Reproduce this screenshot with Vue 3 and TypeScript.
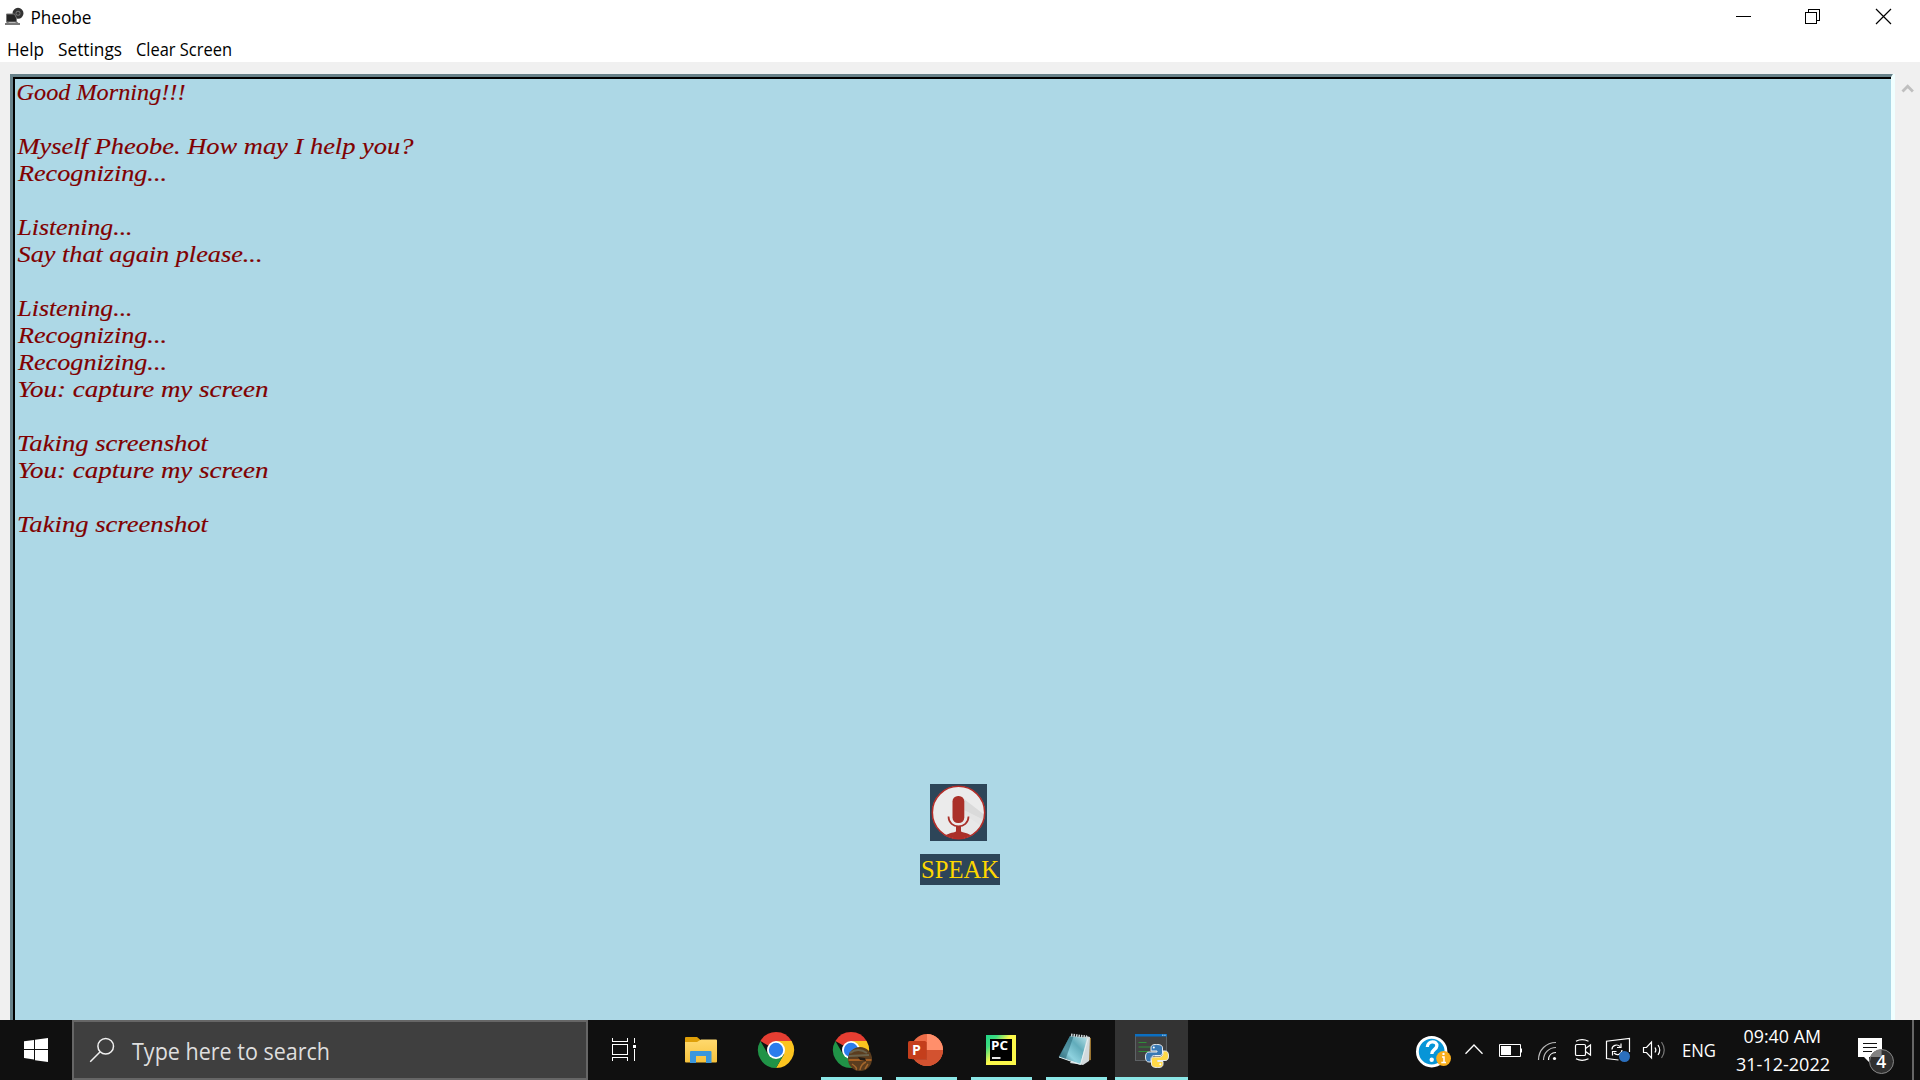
<script setup lang="ts">
interface LogLine { text: string; x: number; width: number }

const good: LogLine = { text: 'Good Morning!!!', x: 1.5, width: 169 }
const intro: LogLine = { text: 'Myself Pheobe. How may I help you?', x: 2.5, width: 396 }
const recognizing: LogLine = { text: 'Recognizing...', x: 3, width: 149 }
const listening: LogLine = { text: 'Listening...', x: 2.5, width: 115 }
const again: LogLine = { text: 'Say that again please...', x: 2.5, width: 245 }
const you: LogLine = { text: 'You: capture my screen', x: 2.5, width: 251 }
const taking: LogLine = { text: 'Taking screenshot', x: 2, width: 191 }

const log: (LogLine | null)[] = [
  good, null, intro, recognizing, null, listening, again, null,
  listening, recognizing, recognizing, you, null, taking, you, null, taking,
]

const menu = [
  { text: 'Help', width: 37, box: 50 },
  { text: 'Settings', width: 64, box: 77 },
  { text: 'Clear Screen', width: 96, box: 110 },
]
</script>

<template>
  <div class="screen">
    <header class="titlebar">
      <svg class="appicon" width="31" height="36" viewBox="0 0 31 36">
        <circle cx="18" cy="13.3" r="4" fill="#777" stroke="#333" stroke-width="3" />
        <circle cx="18" cy="13.3" r="1.500" fill="#333" />
        <path d="M6.500 14h8l2 4v4h-10z" fill="#262626" stroke="#777" />
        <path d="M5 24h15M8 22l-1 2M16 22l2 2" stroke="#777" stroke-width="2" />
      </svg>
      <svg class="ui" width="70" height="36"><text x="-0.500" y="24" font-size="18" textLength="61" lengthAdjust="spacingAndGlyphs">Pheobe</text></svg>
      <svg class="controls" width="190" height="36" viewBox="1730 0 190 36" fill="none" stroke="#000" shape-rendering="crispEdges">
        <path d="M1736 16.500h15" />
        <path d="M1805.500 12.500h11v11h-11zM1808.500 12V9.500h11v11H1817" />
        <path d="M1876 9l15 15M1891 9l-15 15" shape-rendering="auto" stroke-width="1.200" />
      </svg>
    </header>
    <nav class="menubar">
      <svg v-for="m in menu" :key="m.text" class="ui" :width="m.box" height="26">
        <text x="0" y="20" font-size="18" :textLength="m.width" lengthAdjust="spacingAndGlyphs">{{ m.text }}</text>
      </svg>
    </nav>

    <main class="body">
      <section class="outer">
        <div class="inner">
          <svg v-for="(line, i) in log" :key="i" class="line" width="460" height="27">
            <text v-if="line" :x="line.x" y="21" :textLength="line.width" lengthAdjust="spacingAndGlyphs">{{ line.text }}</text>
          </svg>
        </div>
      </section>
      <aside class="scroll">
        <svg width="25" height="30" viewBox="1895 74 25 30"><path d="M1902.500 91.500l5.200-5.200 5.200 5.200" fill="none" stroke="#bfbfbf" stroke-width="2.800" /></svg>
      </aside>
      <div class="speak">
        <svg class="mic" width="57" height="57" viewBox="0 0 57 57">
          <defs><clipPath id="disc"><circle cx="28.500" cy="28.500" r="26" /></clipPath></defs>
          <rect width="57" height="57" fill="#2d4558" />
          <circle cx="28.500" cy="28.500" r="26.500" fill="#ebebeb" />
          <g clip-path="url(#disc)">
            <path d="M34 15l24 21v20H34z" fill="#e4e4e4" />
            <path d="M34 15l22 17v5L34 26z" fill="#dadada" />
            <path d="M34 30l20 14-12 9H30V44z" fill="#e8e8e8" />
            <path d="M14 54c1-4 7-5 11-6 1 0 1-1 1-2v-4h5v4c0 1 0 2 1 2 5 1 10 3 11 6l-14 4z" fill="#aa3029" />
          </g>
          <circle cx="28.500" cy="28.500" r="26.200" fill="none" stroke="#b42d28" stroke-width="1.600" />
          <rect x="22.500" y="12" width="11.800" height="27" rx="5.500" fill="#aa3029" />
          <path d="M18.500 32.500c0 13 20 13 20 0" fill="none" stroke="#aa3029" stroke-width="1.700" />
        </svg>
        <svg class="label" width="80" height="31"><text x="1" y="24" textLength="78" lengthAdjust="spacingAndGlyphs">SPEAK</text></svg>
      </div>
    </main>

    <footer class="taskbar">
      <svg width="72" height="60" viewBox="0 1020 72 60" fill="#fff">
        <path d="M24 1041.300l10-1.400v9.100H24zM35 1039.700l13-1.700v11H35zM24 1050h10v9.500l-10-1.400zM35 1050h13v12l-13-1.800z" />
      </svg>
      <div class="search">
        <svg width="56" height="56" viewBox="74 1022 56 56" fill="none" stroke="#f0f0f0" stroke-width="1.500">
          <circle cx="105.700" cy="1046.300" r="7.800" /><path d="M100.200 1051.800l-10 10" />
        </svg>
        <svg class="ui" width="220" height="56"><text x="2" y="38" font-size="23" fill="#dedede" textLength="198" lengthAdjust="spacingAndGlyphs">Type here to search</text></svg>
      </div>
      <svg width="76" height="60" viewBox="588 1020 76 60" fill="none" stroke="#fff" shape-rendering="crispEdges">
        <path d="M612.500 1038v3.500h15V1038M612.500 1044.500h15v10h-15zM612.500 1061v-3.500h15v3.500M634.500 1038v5M634.500 1049v12" />
        <path d="M633 1045h3v3h-3z" fill="#fff" stroke="none" />
      </svg>
      <svg width="75" height="60" viewBox="664 1020 75 60">
        <defs><linearGradient id="fold" x1="0" y1="0" x2="0" y2="1"><stop stop-color="#ffd96e" /><stop offset="1" stop-color="#f7c23c" /></linearGradient></defs>
        <path d="M685 1038q0-1 1-1h11l3 2.500v4h-15z" fill="#df9f08" />
        <path d="M685 1042h12l4-2.500h15q1 0 1 1v21q0 1-1 1h-30q-1 0-1-1z" fill="url(#fold)" />
        <path d="M690 1063v-11q0-1 1-1h19.500q1 0 1 1v11H706v-7h-10v7z" fill="#3b97dd" />
      </svg>
      <svg width="75" height="60" viewBox="739 1020 75 60">
        <g id="chromeMark">
          <path d="M776 1050L760.400 1041A18 18 0 0 1 791.600 1041z" fill="#e53e32" />
          <path d="M776 1041h15.600A18 18 0 0 1 776 1068l7.800-13.500z" fill="#fcc41f" />
          <path d="M783.800 1054.500L776 1068A18 18 0 0 1 760.400 1041l7.800 13.500z" fill="#209347" />
          <circle cx="776" cy="1050" r="9" fill="#fff" /><circle cx="776" cy="1050" r="7.200" fill="#2b7cec" />
        </g>
      </svg>
      <div class="slot run">
        <svg width="75" height="60" viewBox="814 1020 75 60">
          <use href="#chromeMark" x="75" />
          <circle cx="860" cy="1059" r="12" fill="#5b3d1f" />
          <path d="M850 1053q8-6 17 0M849 1056l20-1" stroke="#6b634c" stroke-width="2" fill="none" />
          <path d="M848.500 1060h23" stroke="#b96a25" stroke-width="1.600" /><path d="M852 1064q6 4 4 6M866 1062q-5 2-6 8M868 1064l-3 5" stroke="#a3662c" stroke-width="1.500" fill="none" />
          <path d="M858 1057l7 1 1 3-6-1z" fill="#231b14" />
        </svg>
      </div>
      <div class="slot run">
        <svg width="75" height="60" viewBox="889 1020 75 60">
          <circle cx="927" cy="1050" r="16" fill="#ed6c47" />
          <path d="M927 1034a16 16 0 0 1 16 16h-16z" fill="#ff8f6b" />
          <path d="M911 1050h32a16 16 0 0 1-32 0z" fill="#d35230" />
          <path d="M911 1042h16v18h-15z" fill="#9b351d" opacity=".35" />
          <rect x="908" y="1041" width="18.300" height="18" rx="1.500" fill="#c43e1c" />
          <text x="912" y="1055" font-family="Open Sans, sans-serif" font-size="14" font-weight="700" fill="#fff">P</text>
        </svg>
      </div>
      <div class="slot run">
        <svg width="75" height="60" viewBox="964 1020 75 60">
          <defs><linearGradient id="pyc" x1="0" y1="0" x2=".65" y2=".55"><stop stop-color="#20d789" /><stop offset=".35" stop-color="#3fdc80" /><stop offset=".75" stop-color="#fcf84a" /></linearGradient></defs>
          <rect x="986" y="1035" width="30" height="30" fill="url(#pyc)" /><rect x="990" y="1039" width="22" height="22" fill="#000" />
          <text x="991" y="1050.300" font-family="Open Sans, sans-serif" font-size="12" font-weight="700" fill="#fff" textLength="17" lengthAdjust="spacingAndGlyphs">PC</text>
          <path d="M992 1058h8.500" stroke="#fff" stroke-width="1.800" />
        </svg>
      </div>
      <div class="slot run">
        <svg width="75" height="60" viewBox="1039 1020 75 60">
          <defs><linearGradient id="note" x1="0" y1="1" x2="1" y2="0"><stop stop-color="#255f6e" /><stop offset=".35" stop-color="#8ed2df" /><stop offset=".65" stop-color="#62acbb" /><stop offset="1" stop-color="#b9e3e9" /></linearGradient></defs>
          <path d="M1084 1037l7 1v22l-5 1z" fill="#9a7430" />
          <path d="M1086 1036l4 1-1 24-6 4-13-2z" fill="#d2d9dc" />
          <path d="M1070 1036l17 1.500-6.500 26.500-21.500-7z" fill="url(#note)" />
          <path d="M1070 1036l-11.500 21 7 2.500 8-23z" fill="#266575" opacity=".55" />
          <path d="M1071 1035l16 2" stroke="#cdd6d9" stroke-width="3" stroke-dasharray="1.500 1" />
          <path d="M1059 1057l21.500 7.500 7.500-26" fill="none" stroke="#e3f1f3" />
        </svg>
      </div>
      <div class="slot run active">
        <svg width="73" height="60" viewBox="1115 1020 73 60">
          <rect x="1135.500" y="1034.500" width="31" height="26" fill="#414141" stroke="#5e6265" />
          <path d="M1135 1034h32v2.500h-32z" fill="#0b6fc2" /><path d="M1162 1035.200h4" stroke="#a9d2f0" stroke-dasharray="1.500 .7" />
          <path d="M1138.500 1042.500h8M1138.500 1047h12M1138.500 1051.500h10" stroke="#2f8f39" stroke-width="1.100" />
          <g stroke="#e9eef2" stroke-width="1">
            <path d="M1156.500 1044.500c-4 0-5.500 1-5.500 3.500v3h6v1h-8c-2.500 0-3.500 2-3.500 5s1 5 3.500 5h2v-3c0-2 1.500-3.500 3.500-3.500h5.500c1.500 0 2.500-1 2.500-2.500v-5c0-2.500-2-3.500-6-3.500z" fill="#3979b5" />
            <path d="M1157.500 1067.500c4 0 5.500-1 5.500-3.500v-2.500h-5.500v-1h7.500c2.500 0 3.500-1.500 3.500-4.500 0-3.500-1-5-3.500-5h-2v2.500c0 2-1.500 3.500-3.500 3.500h-5c-2 0-3 1-3 2.500v4.500c0 2.500 2 3.500 6 3.500z" fill="#ffd948" />
          </g>
          <circle cx="1153.800" cy="1047.500" r="1" fill="#fff" /><circle cx="1160.300" cy="1064.300" r="1" fill="#fff" />
        </svg>
      </div>
      <div class="tray">
        <svg width="47" height="60" viewBox="1410 1020 47 60">
          <circle cx="1431.700" cy="1051.700" r="14.300" fill="#0795d7" stroke="#fff" stroke-width="2.800" />
          <path d="M1427.300 1047c.5-7 10-6.500 9.500-1-.3 3.500-5 3.500-5 8" fill="none" stroke="#fff" stroke-width="3.300" /><circle cx="1431.700" cy="1059.700" r="2.200" fill="#fff" />
          <circle cx="1443.600" cy="1058.500" r="7.400" fill="#f8ae1c" />
          <path d="M1442 1057h2v5.500M1441.300 1062.500h4.700" stroke="#fff" stroke-width="1.500" fill="none" /><circle cx="1443.500" cy="1053.900" r="1.200" fill="#fff" />
        </svg>
        <svg width="34" height="60" viewBox="1457 1020 34 60"><path d="M1465.500 1053.700l8.500-8.700 8.500 8.700" fill="none" stroke="#fff" stroke-width="1.300" /></svg>
        <svg width="39" height="60" viewBox="1491 1020 39 60"><path d="M1499.500 1044.500h21v12h-21zM1521.500 1048.500v4" fill="none" stroke="#fff" /><path d="M1501 1046h10v9h-10z" fill="#fff" /></svg>
        <svg width="36" height="60" viewBox="1530 1020 36 60" fill="none" stroke="#fff" stroke-width="1.200">
          <path d="M1538.500 1060c0-10 7.500-17.500 17.500-17.500M1543.500 1060c0-7 5.500-12.500 12.500-12.500" stroke="#bbb" /><path d="M1548.500 1060c0-4.500 3-7.500 7.500-7.500" /><circle cx="1554.500" cy="1058.500" r="1.600" fill="#fff" stroke="none" />
        </svg>
        <svg width="34" height="60" viewBox="1566 1020 34 60" fill="none" stroke="#fff" stroke-width="1.200">
          <rect x="1575.500" y="1044.500" width="10" height="11" rx="1.300" /><path d="M1585.500 1048.500l5-3.500v10l-5-3.500M1576 1041.200q6-3 12.500 0M1576 1058.800q6 3 12.500 0" />
        </svg>
        <svg width="37" height="60" viewBox="1600 1020 37 60" fill="none" stroke="#fff" stroke-width="1.200">
          <path d="M1629.500 1052v-13.500l-23 2.700v17.300l12 1.500" />
          <path d="M1612 1049.500c0-4 5-6 8-3M1621 1043.500v4h-4M1622 1050c-.5 4.500-5 6-8 3M1612.500 1055.500v-4h4" />
          <circle cx="1624.500" cy="1056.500" r="5.500" fill="#2b6fbd" stroke="none" />
        </svg>
        <svg width="38" height="60" viewBox="1637 1020 38 60" fill="none" stroke="#fff" stroke-width="1.200">
          <path d="M1643.500 1047.500h3l5-5.500v16l-5-5.500h-3zM1655 1047.500q1.700 2.500 0 5M1658 1045q3.500 5 0 10" /><path d="M1661.500 1042q5.500 8 0 16" stroke="#777" />
        </svg>
        <svg class="ui white" width="50" height="60"><text x="7" y="36.500" font-size="17.500" textLength="34" lengthAdjust="spacingAndGlyphs">ENG</text></svg>
        <svg class="ui white" width="117" height="60">
          <text x="18.500" y="23" font-size="18" textLength="77.500" lengthAdjust="spacingAndGlyphs">09:40 AM</text>
          <text x="11" y="51" font-size="18" textLength="94" lengthAdjust="spacingAndGlyphs">31-12-2022</text>
        </svg>
        <svg width="120" height="60" viewBox="1842 1020 120 60">
          <path d="M1858 1038h24v19h-13v5l-5-5h-6z" fill="#fff" />
          <path d="M1863 1043.500h14M1863 1047.500h14M1863 1051.500h9" stroke="#111" />
          <circle cx="1881.500" cy="1061.500" r="12" fill="#333" fill-opacity=".93" stroke="#888" />
          <path d="M1870.500 1057a12 12 0 0 1 11-7.500v7.500z" fill="#828282" />
          <text class="badge" x="1876.300" y="1067.500" font-size="17.500" fill="#fff">4</text>
          <path d="M1913 1020v60" stroke="#666" stroke-width="2" />
        </svg>
      </div>
    </footer>
  </div>
</template>

<style>
body { margin: 0; overflow: hidden; }
</style>

<style scoped>
.screen { width: 1920px; height: 1080px; display: flex; flex-direction: column; background: #f0f0f0; overflow: hidden; }
svg { display: block; flex: none; }
.ui text, .badge { font-family: "Open Sans", "Noto Sans", sans-serif; }
.badge { font-weight: 600; }
.white text { fill: #fff; }
.titlebar { height: 36px; display: flex; background: #fff; }
.controls { margin-left: auto; }
.menubar { height: 26px; padding-left: 7px; display: flex; background: #fff; }
.menubar svg { margin-right: 1px; }
.body { position: relative; height: 958px; display: flex; overflow: hidden; }
.outer { flex: none; width: 1883px; height: 960px; box-sizing: border-box; margin: 12px 2px 0 10px; border: solid #68828a; border-width: 3px 2px 0 3px; border-right-color: #f0ffff; box-shadow: 2px 0 #f0ffff; }
.inner { height: 957px; box-sizing: border-box; border: solid #000; border-width: 2px 0 0 2px; background: #add8e6; }
.line text { font-family: "Liberation Serif", serif; font-style: italic; font-size: 23px; fill: #800000; stroke: #800000; stroke-width: .15px; }
.scroll { margin-top: 12px; }
.speak { position: absolute; left: 920px; top: 722px; width: 80px; }
.mic { margin-left: 10px; }
.label { margin-top: 13px; background: #2d4558; }
.label text { font-family: "Liberation Serif", serif; font-size: 25px; fill: #ffd700; }
.taskbar { height: 60px; display: flex; background: #101010; }
.search { width: 516px; height: 60px; box-sizing: border-box; border: 2px solid #666; background: #3f3f3f; display: flex; }
.slot { flex: none; width: 75px; height: 60px; background: linear-gradient(#8be6e6, #8be6e6) 7px 57px / 61px 3px no-repeat; }
.slot.active { width: 73px; margin-left: 1px; background: linear-gradient(#8be6e6, #8be6e6) 0 57px / 73px 3px no-repeat #333; }
.tray { margin-left: 222px; display: flex; width: 510px; overflow: hidden; }
</style>
